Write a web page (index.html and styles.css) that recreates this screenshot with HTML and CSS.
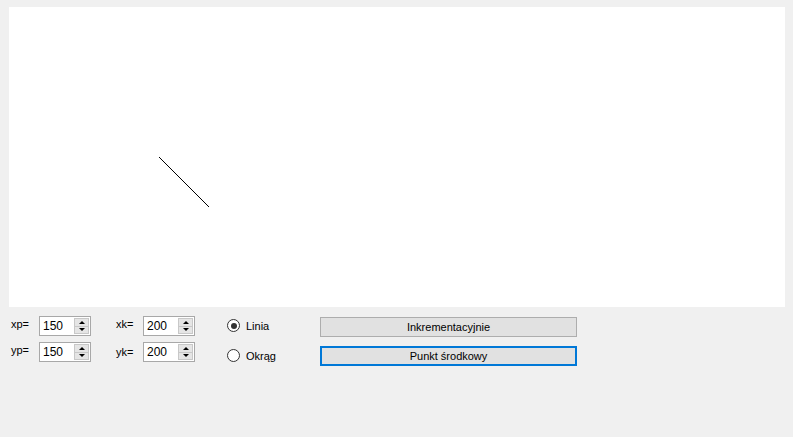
FILE: index.html
```html
<!DOCTYPE html>
<html>
<head>
<meta charset="utf-8">
<link rel="stylesheet" href="styles.css">
</head>
<body>
<div class="window">
  <div class="canvas">
    <svg width="776" height="300" viewBox="0 0 776 300">
      <line x1="150.5" y1="150.5" x2="200.5" y2="200.5" stroke="#000" stroke-width="1" shape-rendering="crispEdges"/>
    </svg>
  </div>
  <div class="controls">
    <div class="labels first">
      <span class="lbl l1">xp=</span>
      <span class="lbl l2">yp=</span>
    </div>
    <div class="spins">
      <div class="spin"><span class="val">150</span><span class="btns"><span class="sb"><i class="up"></i></span><span class="sb"><i class="down"></i></span></span></div>
      <div class="spin"><span class="val">150</span><span class="btns"><span class="sb"><i class="up"></i></span><span class="sb"><i class="down"></i></span></span></div>
    </div>
    <div class="labels second">
      <span class="lbl l1">xk=</span>
      <span class="lbl l2 k2">yk=</span>
    </div>
    <div class="spins">
      <div class="spin"><span class="val">200</span><span class="btns"><span class="sb"><i class="up"></i></span><span class="sb"><i class="down"></i></span></span></div>
      <div class="spin"><span class="val">200</span><span class="btns"><span class="sb"><i class="up"></i></span><span class="sb"><i class="down"></i></span></span></div>
    </div>
    <div class="radios">
      <label class="radio"><span class="circle checked"></span><span>Linia</span></label>
      <label class="radio"><span class="circle"></span><span>Okrąg</span></label>
    </div>
    <div class="buttons">
      <div class="btn">Inkrementacyjnie</div>
      <div class="btn focused">Punkt środkowy</div>
    </div>
  </div>
</div>
</body>
</html>
```
FILE: styles.css
```css
html, body {
  margin: 0;
  padding: 0;
  background: #f0f0f0;
  width: 793px;
  height: 437px;
  overflow: hidden;
  font-family: "Liberation Sans", Arial, sans-serif;
  font-size: 11px;
  color: #000;
}
.window {
  padding: 7px 8px 0 9px;
}
.canvas {
  width: 776px;
  height: 300px;
  background: #fff;
}
.canvas svg {
  display: block;
}
.controls {
  display: flex;
  align-items: flex-start;
  padding-left: 2px;
  margin-top: 9px;
}
.labels {
  display: flex;
  flex-direction: column;
  width: 28px;
}
.labels.second {
  width: 27px;
  margin-left: 25px;
}
.lbl {
  height: 13px;
  line-height: 13px;
}
.l1 { margin-top: 2px; }
.l2 { margin-top: 13px; }
.k2 { margin-top: 15px; }
.spins {
  display: flex;
  flex-direction: column;
  gap: 6px;
}
.spin {
  width: 50px;
  height: 18px;
  border: 1px solid #a8a8a8;
  background: #fff;
  display: flex;
}
.val {
  flex: 1;
  padding-left: 3px;
  line-height: 18px;
  font-size: 12px;
  color: #000;
}
.btns {
  width: 15px;
  display: flex;
  flex-direction: column;
  padding: 1px 1px 1px 0;
}
.sb {
  flex: 1;
  background: #e5e5e5;
  border: 1px solid #c8c8c8;
  display: flex;
  align-items: center;
  justify-content: center;
}
.sb + .sb { border-top: none; }
.up {
  width: 0;
  height: 0;
  border-left: 3px solid transparent;
  border-right: 3px solid transparent;
  border-bottom: 3px solid #000;
}
.down {
  width: 0;
  height: 0;
  border-left: 3px solid transparent;
  border-right: 3px solid transparent;
  border-top: 3px solid #000;
}
.radios {
  display: flex;
  flex-direction: column;
  margin-left: 32px;
  gap: 17px;
  margin-top: 3px;
  width: 93px;
}
.radio {
  display: flex;
  align-items: center;
  height: 13px;
  gap: 6px;
}
.circle {
  width: 11px;
  height: 11px;
  border: 1px solid #333;
  border-radius: 50%;
  background: #fff;
  display: flex;
  align-items: center;
  justify-content: center;
}
.circle.checked::after {
  content: "";
  width: 6px;
  height: 6px;
  border-radius: 50%;
  background: #333;
}
.buttons {
  display: flex;
  flex-direction: column;
  gap: 9px;
  margin-top: 1px;
}
.btn {
  width: 255px;
  height: 18px;
  border: 1px solid #adadad;
  background: #e1e1e1;
  text-align: center;
  line-height: 18px;
  box-sizing: content-box;
}
.btn.focused {
  width: 253px;
  height: 16px;
  line-height: 16px;
  border: 2px solid #0078d7;
}
```
